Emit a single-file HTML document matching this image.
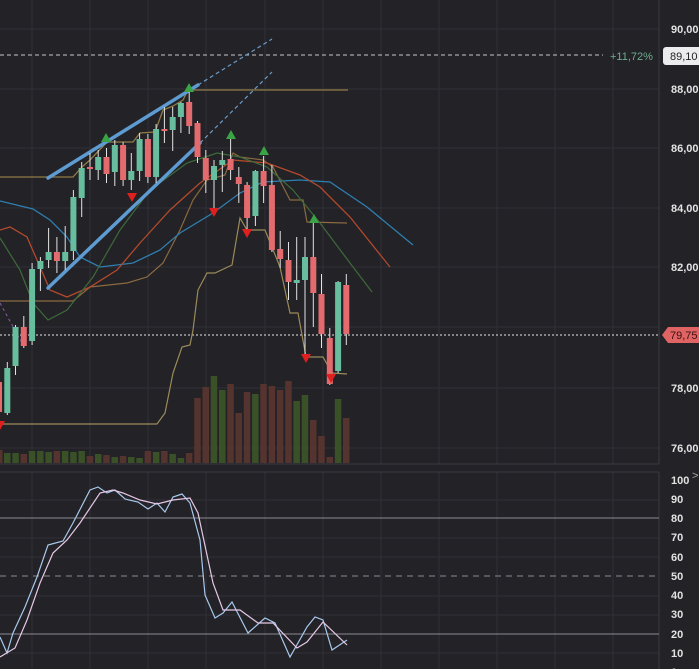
<!DOCTYPE html>
<html><head><meta charset="utf-8"><style>
html,body{margin:0;padding:0;background:#222227;}
svg{display:block;font-family:"Liberation Sans",sans-serif;}
</style></head><body>
<svg width="699" height="669" viewBox="0 0 699 669" xmlns="http://www.w3.org/2000/svg">
<rect width="699" height="669" fill="#222227"/>
<!-- grid main -->
<g stroke="#303037" stroke-width="1">
<line x1="32" y1="0" x2="32" y2="464"/><line x1="90" y1="0" x2="90" y2="464"/><line x1="148" y1="0" x2="148" y2="464"/><line x1="206" y1="0" x2="206" y2="464"/><line x1="265" y1="0" x2="265" y2="464"/><line x1="323" y1="0" x2="323" y2="464"/><line x1="381" y1="0" x2="381" y2="464"/><line x1="439" y1="0" x2="439" y2="464"/><line x1="497" y1="0" x2="497" y2="464"/><line x1="555" y1="0" x2="555" y2="464"/><line x1="613" y1="0" x2="613" y2="464"/>
<line x1="32" y1="472" x2="32" y2="669"/><line x1="90" y1="472" x2="90" y2="669"/><line x1="148" y1="472" x2="148" y2="669"/><line x1="206" y1="472" x2="206" y2="669"/><line x1="265" y1="472" x2="265" y2="669"/><line x1="323" y1="472" x2="323" y2="669"/><line x1="381" y1="472" x2="381" y2="669"/><line x1="439" y1="472" x2="439" y2="669"/><line x1="497" y1="472" x2="497" y2="669"/><line x1="555" y1="472" x2="555" y2="669"/><line x1="613" y1="472" x2="613" y2="669"/>
<line x1="0" y1="29" x2="659" y2="29"/><line x1="0" y1="89" x2="659" y2="89"/><line x1="0" y1="148" x2="659" y2="148"/><line x1="0" y1="208" x2="659" y2="208"/><line x1="0" y1="267" x2="659" y2="267"/><line x1="0" y1="327" x2="659" y2="327"/><line x1="0" y1="388" x2="659" y2="388"/><line x1="0" y1="448" x2="659" y2="448"/>
<line x1="0" y1="500" x2="659" y2="500"/><line x1="0" y1="538" x2="659" y2="538"/><line x1="0" y1="557" x2="659" y2="557"/><line x1="0" y1="596" x2="659" y2="596"/><line x1="0" y1="615" x2="659" y2="615"/><line x1="0" y1="653" x2="659" y2="653"/>
</g>
<line x1="0" y1="464" x2="659" y2="464" stroke="#3a3a42"/>
<line x1="0" y1="472" x2="659" y2="472" stroke="#3a3a42"/>
<line x1="659" y1="0" x2="659" y2="464" stroke="#3a3a42"/>
<line x1="659" y1="472" x2="659" y2="669" stroke="#3a3a42"/>
<!-- osc levels -->
<line x1="0" y1="518" x2="659" y2="518" stroke="#8a8a90"/>
<line x1="0" y1="634" x2="659" y2="634" stroke="#8a8a90"/>
<line x1="0" y1="576" x2="659" y2="576" stroke="#8a8a90" stroke-dasharray="6,5"/>
<!-- volume -->
<g>
<rect x="-4" y="450" width="6.5" height="13" fill="#55332f"/>
<rect x="4" y="453" width="6.5" height="10" fill="#3a5128"/>
<rect x="12.3" y="453" width="6.5" height="10" fill="#3a5128"/>
<rect x="20.5" y="454" width="6.5" height="9" fill="#55332f"/>
<rect x="28.8" y="451" width="6.5" height="12" fill="#3a5128"/>
<rect x="37.1" y="451" width="6.5" height="12" fill="#3a5128"/>
<rect x="45.4" y="452" width="6.5" height="11" fill="#3a5128"/>
<rect x="53.6" y="451" width="6.5" height="12" fill="#55332f"/>
<rect x="61.9" y="451" width="6.5" height="12" fill="#3a5128"/>
<rect x="70.2" y="452" width="6.5" height="11" fill="#3a5128"/>
<rect x="78.4" y="451" width="6.5" height="12" fill="#3a5128"/>
<rect x="86.7" y="456" width="6.5" height="7" fill="#55332f"/>
<rect x="95" y="454" width="6.5" height="9" fill="#3a5128"/>
<rect x="103.2" y="455" width="6.5" height="8" fill="#55332f"/>
<rect x="111.5" y="457" width="6.5" height="6" fill="#3a5128"/>
<rect x="119.8" y="456" width="6.5" height="7" fill="#55332f"/>
<rect x="128" y="457" width="6.5" height="6" fill="#3a5128"/>
<rect x="136.3" y="458" width="6.5" height="5" fill="#3a5128"/>
<rect x="144.6" y="451" width="6.5" height="12" fill="#55332f"/>
<rect x="152.9" y="452" width="6.5" height="11" fill="#3a5128"/>
<rect x="161.1" y="451" width="6.5" height="12" fill="#55332f"/>
<rect x="169.4" y="454" width="6.5" height="9" fill="#3a5128"/>
<rect x="177.7" y="458" width="6.5" height="5" fill="#3a5128"/>
<rect x="185.9" y="453" width="6.5" height="10" fill="#55332f"/>
<rect x="194.2" y="398" width="6.5" height="65" fill="#55332f"/>
<rect x="202.5" y="387" width="6.5" height="76" fill="#55332f"/>
<rect x="210.7" y="376" width="6.5" height="87" fill="#3a5128"/>
<rect x="219" y="390" width="6.5" height="73" fill="#3a5128"/>
<rect x="227.3" y="384" width="6.5" height="79" fill="#55332f"/>
<rect x="235.5" y="413" width="6.5" height="50" fill="#55332f"/>
<rect x="243.8" y="392" width="6.5" height="71" fill="#55332f"/>
<rect x="252.1" y="394" width="6.5" height="69" fill="#3a5128"/>
<rect x="260.3" y="384" width="6.5" height="79" fill="#55332f"/>
<rect x="268.6" y="386" width="6.5" height="77" fill="#55332f"/>
<rect x="276.9" y="390" width="6.5" height="73" fill="#55332f"/>
<rect x="285.2" y="381" width="6.5" height="82" fill="#55332f"/>
<rect x="293.4" y="401" width="6.5" height="62" fill="#3a5128"/>
<rect x="301.7" y="395" width="6.5" height="68" fill="#3a5128"/>
<rect x="310" y="420" width="6.5" height="43" fill="#55332f"/>
<rect x="318.2" y="436" width="6.5" height="27" fill="#55332f"/>
<rect x="326.5" y="457" width="6.5" height="6" fill="#55332f"/>
<rect x="334.8" y="399" width="6.5" height="64" fill="#3a5128"/>
<rect x="343" y="418" width="6.5" height="45" fill="#55332f"/>
</g>
<!-- horizontal lines -->
<line x1="0" y1="55" x2="603" y2="55" stroke="#c8c8c8" stroke-dasharray="4,3"/>
<line x1="0" y1="335" x2="659" y2="335" stroke="#e8e8e8" stroke-dasharray="2,2"/>
<line x1="190" y1="90" x2="348" y2="90" stroke="#8f7c45" stroke-width="1.3"/>
<polyline fill="none" stroke="#8f7c45" stroke-width="1.3" points="0,177 73,177 82,167 90,160 107,142 133,142 140,133 155,132 163,110 173,106 183,100 188,90"/>
<polyline fill="none" stroke="#9c8a58" stroke-width="1.2" points="0,424 157,424 165,413 173,373 182,347 190,345 193,330 198,290 207,273 215,273 232,265 240,218 247,230 265,230 280,267 290,313 298,313 306,357 323,357 332,373 347,374"/>
<polyline fill="none" stroke="#8a6a40" stroke-width="1.2" points="0,301 73,301 90,287 127,283 147,277 163,263 180,230 193,200 207,180 225,175 233,153 240,157 263,160 273,167 290,200 303,200 307,222 347,223"/>
<!-- MAs -->
<polyline fill="none" stroke="#2f7fb0" stroke-width="1.3" points="0,201 33,209 50,220 67,237 80,257 100,267 133,263 160,250 180,233 213,213 240,193 263,182 300,180 330,182 367,207 413,245"/>
<polyline fill="none" stroke="#b24a2c" stroke-width="1.3" points="0,230 10,227 27,237 37,260 50,290 67,297 90,287 117,270 140,243 170,210 200,183 233,160 267,163 300,175 320,187 350,217 390,267"/>
<polyline fill="none" stroke="#3f6a3a" stroke-width="1.2" points="0,238 20,270 33,303 48,320 67,310 93,277 120,230 150,190 187,163 217,153 240,157 267,167 293,190 320,223 350,263 372,292"/>
<line x1="0" y1="303" x2="22" y2="343" stroke="#8a5aa8" stroke-dasharray="3,3"/>
<!-- trend lines -->
<line x1="48" y1="178" x2="198" y2="85" stroke="#5e9bd0" stroke-width="3.5" stroke-linecap="round"/>
<line x1="198" y1="85" x2="272" y2="39" stroke="#6a9cc8" stroke-width="1.2" stroke-dasharray="4,3"/>
<line x1="48" y1="288" x2="200" y2="143" stroke="#5e9bd0" stroke-width="3.5" stroke-linecap="round"/>
<line x1="200" y1="143" x2="272" y2="72" stroke="#6a9cc8" stroke-width="1.2" stroke-dasharray="4,3"/>
<!-- candles -->
<g stroke="#e4e4e4" stroke-width="1">
<line x1="-1" y1="376" x2="-1" y2="418"/><line x1="7.3" y1="362" x2="7.3" y2="415"/><line x1="15.5" y1="325" x2="15.5" y2="375"/><line x1="23.8" y1="316" x2="23.8" y2="348"/><line x1="32.1" y1="263" x2="32.1" y2="345"/><line x1="40.4" y1="257" x2="40.4" y2="291"/><line x1="48.6" y1="228" x2="48.6" y2="268"/><line x1="56.9" y1="237" x2="56.9" y2="273"/><line x1="65.2" y1="226" x2="65.2" y2="270"/><line x1="73.4" y1="190" x2="73.4" y2="260"/><line x1="81.7" y1="162" x2="81.7" y2="217"/><line x1="90" y1="153" x2="90" y2="180"/><line x1="98.2" y1="150" x2="98.2" y2="180"/><line x1="106.5" y1="148" x2="106.5" y2="183"/><line x1="114.8" y1="140" x2="114.8" y2="186"/><line x1="123.1" y1="142" x2="123.1" y2="186"/><line x1="131.3" y1="153" x2="131.3" y2="190"/><line x1="139.6" y1="133" x2="139.6" y2="181"/><line x1="147.9" y1="134" x2="147.9" y2="183"/><line x1="156.1" y1="124" x2="156.1" y2="183"/><line x1="164.4" y1="107" x2="164.4" y2="143"/><line x1="172.7" y1="107" x2="172.7" y2="151"/><line x1="180.9" y1="102" x2="180.9" y2="133"/><line x1="189.2" y1="92" x2="189.2" y2="134"/><line x1="197.5" y1="121" x2="197.5" y2="163"/><line x1="205.8" y1="150" x2="205.8" y2="193"/><line x1="214" y1="160" x2="214" y2="213"/><line x1="222.3" y1="151" x2="222.3" y2="192"/><line x1="230.6" y1="138" x2="230.6" y2="180"/><line x1="238.8" y1="167" x2="238.8" y2="203"/><line x1="247.1" y1="182" x2="247.1" y2="229"/><line x1="255.4" y1="170" x2="255.4" y2="226"/><line x1="263.6" y1="156" x2="263.6" y2="203"/><line x1="271.9" y1="165" x2="271.9" y2="252"/><line x1="280.2" y1="231" x2="280.2" y2="268"/><line x1="288.5" y1="242" x2="288.5" y2="300"/><line x1="296.7" y1="237" x2="296.7" y2="300"/><line x1="305" y1="237" x2="305" y2="355"/><line x1="313.3" y1="222" x2="313.3" y2="327"/><line x1="321.5" y1="274" x2="321.5" y2="348"/><line x1="329.8" y1="328" x2="329.8" y2="385"/><line x1="338.1" y1="281" x2="338.1" y2="373"/><line x1="346.3" y1="274" x2="346.3" y2="345"/>
</g>
<g>
<rect x="-4" y="382" width="6" height="30" fill="#e36b6e"/>
<rect x="4.3" y="368" width="6" height="45" fill="#67bd9d"/>
<rect x="12.5" y="327" width="6" height="39" fill="#67bd9d"/>
<rect x="20.8" y="327" width="6" height="19" fill="#e36b6e"/>
<rect x="29.1" y="269" width="6" height="72" fill="#67bd9d"/>
<rect x="37.4" y="261" width="6" height="8" fill="#67bd9d"/>
<rect x="45.6" y="252" width="6" height="8" fill="#67bd9d"/>
<rect x="53.9" y="252" width="6" height="9" fill="#e36b6e"/>
<rect x="62.2" y="252" width="6" height="9" fill="#67bd9d"/>
<rect x="70.4" y="197" width="6" height="54" fill="#67bd9d"/>
<rect x="78.7" y="168" width="6" height="30" fill="#67bd9d"/>
<rect x="87" y="167" width="6" height="2" fill="#e36b6e"/>
<rect x="95.2" y="157" width="6" height="13" fill="#67bd9d"/>
<rect x="103.5" y="157" width="6" height="17" fill="#e36b6e"/>
<rect x="111.8" y="145" width="6" height="27" fill="#67bd9d"/>
<rect x="120.1" y="145" width="6" height="35" fill="#e36b6e"/>
<rect x="128.3" y="171" width="6" height="9" fill="#67bd9d"/>
<rect x="136.6" y="139" width="6" height="32" fill="#67bd9d"/>
<rect x="144.9" y="139" width="6" height="38" fill="#e36b6e"/>
<rect x="153.1" y="129" width="6" height="48" fill="#67bd9d"/>
<rect x="161.4" y="129" width="6" height="2" fill="#e36b6e"/>
<rect x="169.7" y="117" width="6" height="13" fill="#67bd9d"/>
<rect x="177.9" y="103" width="6" height="14" fill="#67bd9d"/>
<rect x="186.2" y="102" width="6" height="24" fill="#e36b6e"/>
<rect x="194.5" y="123" width="6" height="34" fill="#e36b6e"/>
<rect x="202.8" y="158" width="6" height="22" fill="#e36b6e"/>
<rect x="211" y="166" width="6" height="14" fill="#67bd9d"/>
<rect x="219.3" y="160" width="6" height="5" fill="#67bd9d"/>
<rect x="227.6" y="159" width="6" height="11" fill="#e36b6e"/>
<rect x="235.8" y="177" width="6" height="7" fill="#e36b6e"/>
<rect x="244.1" y="185" width="6" height="33" fill="#e36b6e"/>
<rect x="252.4" y="171" width="6" height="45" fill="#67bd9d"/>
<rect x="260.6" y="171" width="6" height="15" fill="#e36b6e"/>
<rect x="268.9" y="185" width="6" height="65" fill="#e36b6e"/>
<rect x="277.2" y="249" width="6" height="10" fill="#e36b6e"/>
<rect x="285.5" y="260" width="6" height="22" fill="#e36b6e"/>
<rect x="293.7" y="280" width="6" height="3" fill="#67bd9d"/>
<rect x="302" y="257" width="6" height="23" fill="#67bd9d"/>
<rect x="310.3" y="257" width="6" height="36" fill="#e36b6e"/>
<rect x="318.5" y="294" width="6" height="40" fill="#e36b6e"/>
<rect x="326.8" y="338" width="6" height="46" fill="#e36b6e"/>
<rect x="335.1" y="282" width="6" height="89" fill="#67bd9d"/>
<rect x="343.3" y="285" width="6" height="49" fill="#e36b6e"/>
</g>
<!-- arrows -->
<g fill="#3aa346">
<polygon points="101,142 111,142 106,133"/><polygon points="184,92 194,92 189,83"/><polygon points="226,139 236,139 231,130"/><polygon points="259,155 269,155 264,146"/><polygon points="309,223 319,223 314,214"/>
</g>
<g fill="#e01f1f">
<polygon points="127,193 137,193 132,202"/><polygon points="209,208 219,208 214,217"/><polygon points="242,229 252,229 247,238"/><polygon points="301,354 311,354 306,363"/><polygon points="326,374 336,374 331,383"/><polygon points="-5,421 5,421 0,430"/>
</g>
<!-- oscillator -->
<polyline fill="none" stroke="#a8c8ec" stroke-width="1.2" points="0,637 7,653 13,633 25,607 37,577 48,545 63,541 73,523 90,490 98,487 107,493 115,490 125,499 138,502 148,509 157,503 165,512 173,497 182,494 190,503 200,540 205,595 215,618 223,613 232,602 248,633 265,618 275,623 290,657 307,627 315,617 323,620 332,650 347,640"/>
<polyline fill="none" stroke="#e6c8e6" stroke-width="1.2" points="0,657 15,648 27,620 40,583 53,553 67,540 80,523 100,493 113,490 123,493 140,500 157,504 173,500 190,498 198,513 213,583 223,610 240,610 258,623 273,623 297,648 307,642 323,622 347,645"/>
<!-- axis labels -->
<g fill="#e2e2e2" font-size="11" font-weight="bold">
<text x="671" y="33">90,00</text><text x="671" y="93">88,00</text><text x="671" y="152">86,00</text><text x="671" y="212">84,00</text><text x="671" y="271">82,00</text><text x="671" y="392">78,00</text><text x="671" y="452">76,00</text>
<text x="671" y="484">100</text><text x="671" y="503">90</text><text x="671" y="522">80</text><text x="671" y="541">70</text><text x="671" y="561">60</text><text x="671" y="580">50</text><text x="671" y="599">40</text><text x="671" y="618">30</text><text x="671" y="638">20</text><text x="671" y="657">10</text><text x="671" y="676">0</text>
</g>
<text x="692" y="479" fill="#aaa" font-size="11">&gt;</text>
<text x="610" y="60" fill="#6fae8f" font-size="11">+11,72%</text>
<rect x="663" y="47" width="40" height="18" rx="3" fill="#ececee"/>
<text x="670" y="60" fill="#222" font-size="11">89,10</text>
<polygon points="662,335 668,327 699,327 699,343 668,343" fill="#e06464"/>
<text x="670" y="339" fill="#3a0f10" font-size="11">79,75</text>
</svg>
</body></html>
